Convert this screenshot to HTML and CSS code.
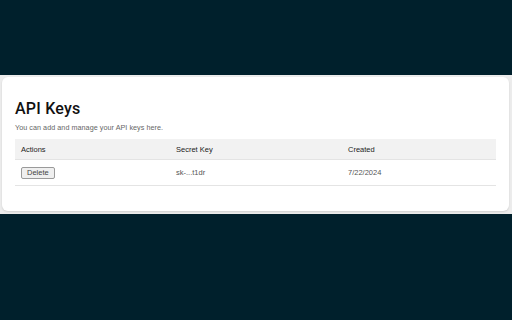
FILE: index.html
```html
<!DOCTYPE html>
<html>
<head>
<meta charset="utf-8">
<link rel="stylesheet" href="styles.css">
</head>
<body>
<div class="frame">
  <div class="card">
    <h1 class="title">API Keys</h1>
    <p class="subtitle">You can add and manage your API keys here.</p>
    <table class="keys">
      <thead>
        <tr>
          <th class="col-actions">Actions</th>
          <th class="col-key">Secret Key</th>
          <th class="col-created">Created</th>
        </tr>
      </thead>
      <tbody>
        <tr>
          <td><button class="btn">Delete</button></td>
          <td>sk-...t1dr</td>
          <td>7/22/2024</td>
        </tr>
      </tbody>
    </table>
  </div>
</div>
</body>
</html>
```
FILE: styles.css
```css
html, body {
  margin: 0;
  padding: 0;
  background: #00202c;
  height: 100%;
}
body {
  padding-top: 75px;
  box-sizing: border-box;
  font-family: "Liberation Sans", Arial, sans-serif;
}
.frame {
  background: #ececec;
  padding: 2px 3px 3px 2px;
}
.card {
  background: #ffffff;
  border-radius: 6px;
  box-shadow: 0 1px 2px rgba(0,0,0,0.12);
  padding: 22px 13px 25px 13px;
}
.title {
  margin: 0;
  font-family: Roboto, "Liberation Sans", Arial, sans-serif;
  font-size: 16px;
  line-height: 20px;
  font-weight: 500;
  letter-spacing: 0.2px;
  color: #111;
}
.subtitle {
  margin: 4px 0 0 0;
  font-size: 7.2px;
  line-height: 9px;
  letter-spacing: 0.05px;
  color: #666;
}
.keys {
  margin-top: 7px;
  width: 100%;
  border-collapse: collapse;
  font-size: 7.5px;
}
.keys th {
  background: #f2f2f2;
  text-align: left;
  font-weight: normal;
  color: #222;
  height: 20px;
  padding: 0 6px;
  border-bottom: 1px solid #e4e4e4;
}
.keys td {
  height: 25px;
  padding: 0 6px;
  color: #555;
  border-bottom: 1px solid #e4e4e4;
}
.col-actions { width: 155px; box-sizing: border-box; }
.col-key { width: 172px; box-sizing: border-box; }
.btn {
  font-family: "Liberation Sans", Arial, sans-serif;
  font-size: 7.5px;
  color: #444;
  background: #efefef;
  border: 1px solid #9a9a9a;
  border-radius: 2px;
  padding: 1px 5px;
  height: 12px;
  line-height: 8px;
}
```
